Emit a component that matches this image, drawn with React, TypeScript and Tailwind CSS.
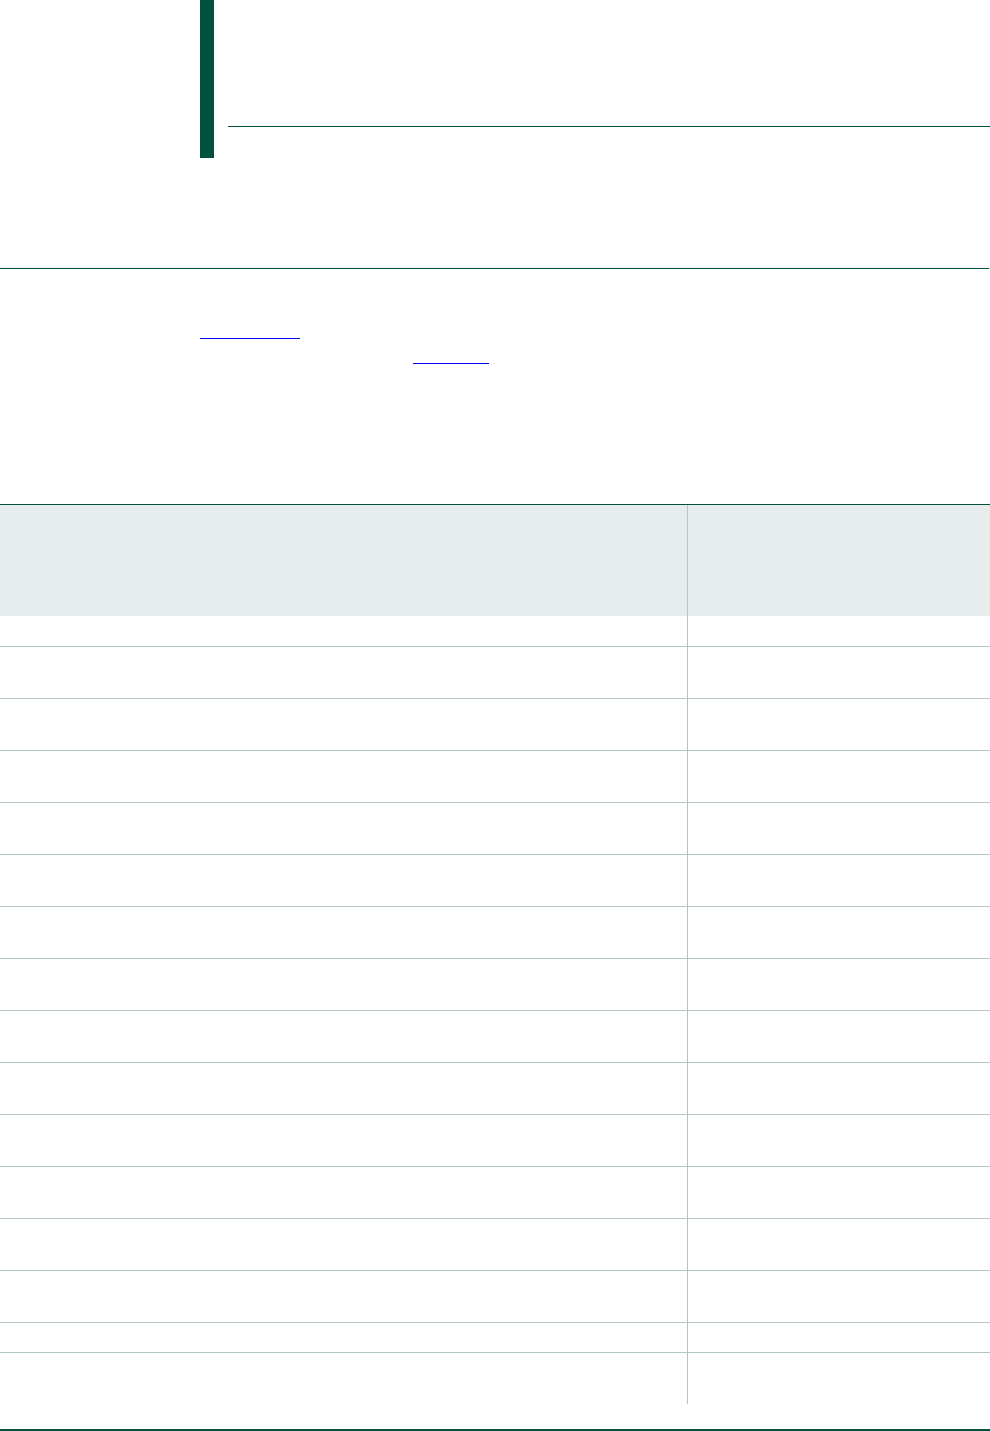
const rows = [30, 51, 51, 51, 51, 51, 51, 51, 51, 51, 51, 51, 51, 51, 29];

function Row({ h, last }: { h: number; last?: boolean }) {
  return (
    <div className={`flex ${last ? "" : "border-b border-[#b4c7c3]"}`} style={{ height: h }}>
      <div className="w-[688px] border-r border-[#b4c7c3]" />
      <div className="flex-1" />
    </div>
  );
}

export default function App() {
  return (
    <div className="w-[990px] min-h-[1431px] bg-white font-['Liberation_Sans',sans-serif]">
      {/* Title block */}
      <div className="flex pl-[200px]">
        <div className="w-[14px] h-[158px] bg-[#00513f]" />
        <div className="flex-1 ml-[14px] pt-[126px]">
          <div className="h-px bg-[#00513f]" />
        </div>
      </div>

      <div className="mt-[110px] h-px w-[989px] bg-[#00513f]" />

      {/* Links */}
      <div className="ml-[200px] mt-[69px] w-[100px] h-px bg-[#0000ff]" />
      <div className="ml-[413px] mt-[24px] w-[76px] h-px bg-[#0000ff]" />

      {/* Table */}
      <div className="mt-[140px] border-t border-[#00513f]">
        <div className="flex h-[111px] bg-[#e6ecec]">
          <div className="w-[688px] border-r border-[#b4c7c3]" />
          <div className="flex-1" />
        </div>
        {rows.map((h, i) => (
          <Row key={i} h={h + 1} />
        ))}
        <Row h={51} last />
      </div>

      <div className="mt-[25px] h-[1.5px] bg-[#00513f]" />
    </div>
  );
}
